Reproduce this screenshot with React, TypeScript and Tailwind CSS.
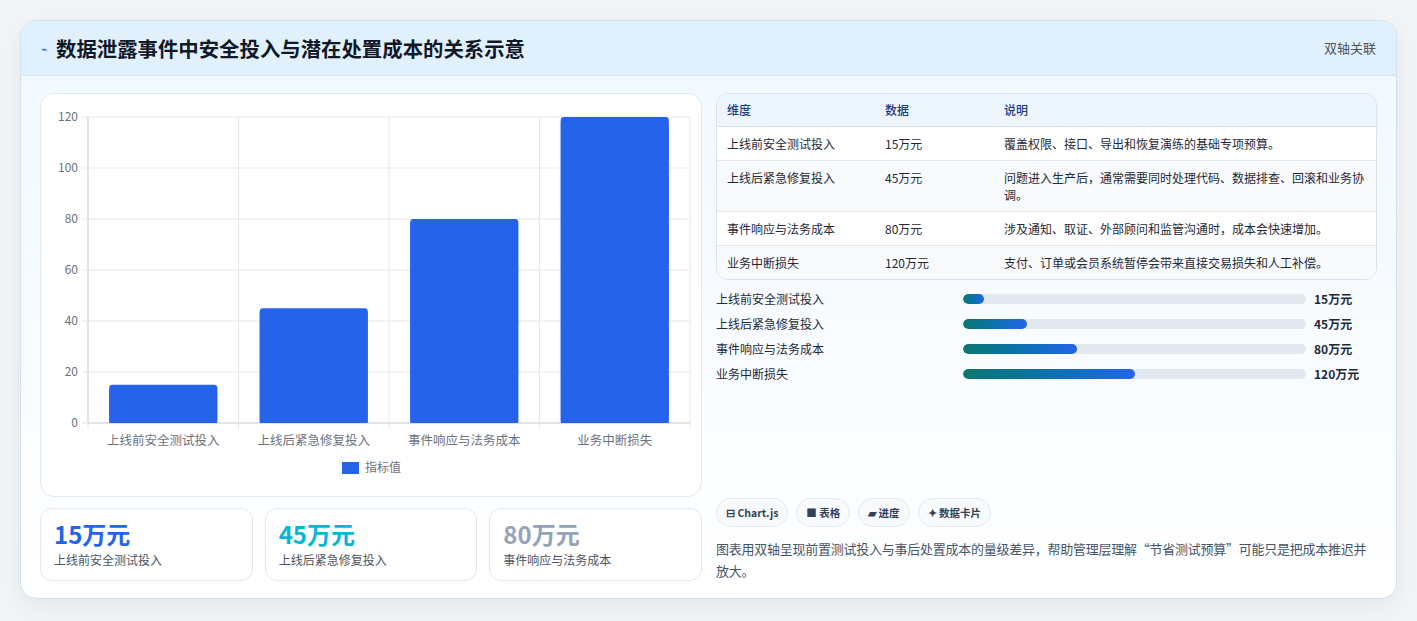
import React from "react";

const rows = [
  { d: "上线前安全测试投入", v: "15万元", n: 15, t: "覆盖权限、接口、导出和恢复演练的基础专项预算。" },
  { d: "上线后紧急修复投入", v: "45万元", n: 45, t: "问题进入生产后，通常需要同时处理代码、数据排查、回滚和业务协调。" },
  { d: "事件响应与法务成本", v: "80万元", n: 80, t: "涉及通知、取证、外部顾问和监管沟通时，成本会快速增加。" },
  { d: "业务中断损失", v: "120万元", n: 120, t: "支付、订单或会员系统暂停会带来直接交易损失和人工补偿。" },
];

function Chart() {
  const x0 = 47, x1 = 649, y0 = 23, y1 = 329;
  const h = y1 - y0;
  const cw = (x1 - x0) / 4;
  return (
    <svg width="662" height="403" className="block">
      {[0, 20, 40, 60, 80, 100, 120].map((t) => {
        const y = y1 - (t / 120) * h;
        return (
          <g key={t}>
            <line x1={x0 - 6} x2={x1} y1={y} y2={y} stroke="#e5e7eb" />
            <text x={x0 - 10} y={y + 4} textAnchor="end" fontSize="12" fill="#6b7280">{t}</text>
          </g>
        );
      })}
      {[0, 1, 2, 3, 4].map((i) => (
        <line key={i} x1={x0 + i * cw} x2={x0 + i * cw} y1={y0} y2={y1 + 6} stroke="#e5e7eb" />
      ))}
      <line x1={x0} x2={x0} y1={y0} y2={y1} stroke="#d1d5db" />
      <line x1={x0} x2={x1} y1={y1} y2={y1} stroke="#d1d5db" />
      {rows.map((r, i) => {
        const bh = (r.n / 120) * h;
        const bx = x0 + i * cw + (cw - 108) / 2;
        return (
          <g key={i}>
            <rect x={bx} y={y1 - bh} width="108" height={bh} fill="#2563eb" rx="3" />
            <rect x={bx} y={y1 - bh + 4} width="108" height={bh - 4} fill="#2563eb" />
            <text x={x0 + i * cw + cw / 2} y={y1 + 22} textAnchor="middle" fontSize="12.5" fill="#6b7280">{r.d}</text>
          </g>
        );
      })}
      <rect x="301" y="368" width="17" height="12" fill="#2563eb" />
      <text x="324" y="378" fontSize="12" fill="#6b7280">指标值</text>
    </svg>
  );
}

export default function App() {
  return (
    <div className="w-[1417px] h-[621px] bg-[#f3f4f6] pt-[20px] pl-[20px]" style={{ fontFamily: '"Noto Sans CJK SC", "Noto Sans", sans-serif' }}>
      <div className="w-[1377px] h-[579px] rounded-[16px] border border-[#cde3f3] bg-gradient-to-b from-[#f0f8ff] to-white overflow-hidden shadow-[0_8px_24px_rgba(0,0,0,0.06)]">
        <div className="h-[55px] flex items-center justify-between px-[20px] bg-[#e1f0fd] border-b border-[#d4e7f7]">
          <div className="flex items-center gap-[8px]">
            <span className="text-[11px] text-[#2563eb]">⌁</span>
            <span className="text-[20.4px] font-bold text-[#111827]">数据泄露事件中安全投入与潜在处置成本的关系示意</span>
          </div>
          <span className="text-[13px] text-[#4b5563]">双轴关联</span>
        </div>
        <div className="flex gap-[14px] px-[19px] pt-[17px]">
          <div className="w-[662px] flex flex-col gap-[11px]">
            <div className="h-[404px] rounded-[14px] border border-[#e2e8f0] bg-white overflow-hidden">
              <Chart />
            </div>
            <div className="grid grid-cols-3 gap-[12px]">
              {[
                ["15万元", "text-[#2563eb]", "上线前安全测试投入"],
                ["45万元", "text-[#06b6d4]", "上线后紧急修复投入"],
                ["80万元", "text-[#94a3b8]", "事件响应与法务成本"],
              ].map(([v, c, l]) => (
                <div key={l} className="h-[73px] rounded-[12px] border border-[#e2e8f0] bg-white px-[13px] pt-[10px]">
                  <div className={`text-[24px] font-bold leading-[30px] ${c}`}>{v}</div>
                  <div className="text-[12px] text-[#4b5563] mt-[2px]">{l}</div>
                </div>
              ))}
            </div>
          </div>
          <div className="w-[662px] flex flex-col">
            <div className="rounded-[12px] border border-[#d6e2ee] bg-white overflow-hidden text-[12px] text-[#1f2937]">
              <div className="h-[33px] flex items-center bg-[#eef6fd] border-b border-[#d6e2ee] text-[#1e3a8a] font-medium">
                <div className="w-[168px] pl-[10px]">维度</div>
                <div className="w-[119px]">数据</div>
                <div className="flex-1">说明</div>
              </div>
              {rows.map((r, i) => (
                <div key={i} className={`flex py-[8px] leading-[17px] ${i < 3 ? "border-b border-[#e5e7eb]" : ""} ${i % 2 ? "bg-[#f8fafc]" : "bg-white"}`}>
                  <div className="w-[168px] pl-[10px]">{r.d}</div>
                  <div className="w-[119px]">{r.v}</div>
                  <div className="flex-1 pr-[10px]">{r.t}</div>
                </div>
              ))}
            </div>
            <div className="flex flex-col gap-[7px] mt-[10px] text-[12px] text-[#1f2937]">
              {rows.map((r, i) => (
                <div key={i} className="flex items-center h-[18px]">
                  <div className="w-[247px]">{r.d}</div>
                  <div className="w-[343px] h-[10px] rounded-full bg-[#e2e8f0] overflow-hidden">
                    <div className="h-full rounded-full bg-gradient-to-r from-[#0f766e] to-[#2563eb]" style={{ width: `${(r.n / 240) * 100}%` }} />
                  </div>
                  <div className="ml-[8px] font-bold">{r.v}</div>
                </div>
              ))}
            </div>
            <div className="flex gap-[8px] mt-[115px] text-[10.5px] font-bold text-[#334155]">
              {["⊟ Chart.js", "■ 表格", "▰ 进度", "✦ 数据卡片"].map((c) => (
                <div key={c} className="h-[29px] px-[9px] flex items-center rounded-full border border-[#e2e8f0] bg-[#f8fafc]">{c}</div>
              ))}
            </div>
            <div className="mt-[11px] text-[13px] leading-[22px] text-[#475569] tracking-[-0.25px]">
              图表用双轴呈现前置测试投入与事后处置成本的量级差异，帮助管理层理解“节省测试预算”可能只是把成本推迟并放大。
            </div>
          </div>
        </div>
      </div>
    </div>
  );
}
